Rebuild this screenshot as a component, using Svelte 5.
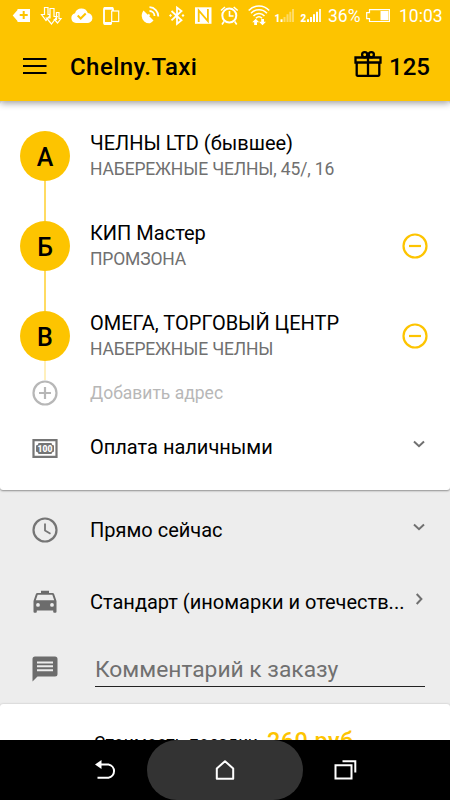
<script>
    let comment = "";

    const stops = [
        { letter: "А", title: "ЧЕЛНЫ LTD (бывшее)", address: "НАБЕРЕЖНЫЕ ЧЕЛНЫ, 45/, 16", removable: false },
        { letter: "Б", title: "КИП Мастер", address: "ПРОМЗОНА", removable: true },
        { letter: "В", title: "ОМЕГА, ТОРГОВЫЙ ЦЕНТР", address: "НАБЕРЕЖНЫЕ ЧЕЛНЫ", removable: true },
    ];
</script>

<div class="screen">
    <header class="top">
        <div class="status">
            <svg class="notifications" viewBox="0 0 124 32" fill="#fff">
                <path fill-rule="evenodd" d="M12.7 15.5 17.5 10V9H30v13H17.5v-1zM22.7 11v3h-3v2h3v3h2v-3h3v-2h-3v-3z" />
                <g fill="none" stroke="#fff" stroke-width="1.2">
                    <path d="M44.5 7.5h3.5v7h3L46 20.5l-4.500-6h3z" />
                    <path d="M50 8.500h4v8h3L51.500 24 46.500 18h3.500z" fill="#fdc400" />
                    <path d="M56.500 12.500h2.500v6h2L57.500 23l-3-3.500h2z" />
                </g>
                <path d="M76 23a5 5 0 0 1-1-9.800 6.800 6.800 0 0 1 12.800-.2A5 5 0 0 1 87 23z" />
                <path d="m77.700 15.500 3 3 5-5" fill="none" stroke="#fdc400" stroke-width="2" />
                <g fill="none" stroke="#fff">
                    <path d="M111 24h-6q-1 0-1-1V9q0-1 1-1h7q1 0 1 1v2" stroke-width="1.800" />
                    <path d="M104 8.500h9M104 23.300h8" stroke-width="2.500" />
                    <rect x="111.700" y="11" width="7" height="10.500" fill="#fdc400" stroke-width="1.200" />
                </g>
            </svg>
            <svg class="system" viewBox="140 0 182 32" fill="#fff">
                <path d="M143.500 10.500 153.500 20.500A8 8 0 0 1 150 23.200a7.500 7.500 0 0 1-8.300-7.200c0-2 .7-4 1.800-5.500z" />
                <path d="M149.500 14.500 148 16M149.500 11a5 5 0 0 1 5 5M149.500 7.200a9 9 0 0 1 8.800 9.300" fill="none" stroke="#fff" stroke-width="1.800" />
                <g fill="none" stroke="#fff" stroke-width="1.800">
                    <path d="m171.500 11 10 9.300-4.500 3.500V7.500l4.500 3.500-10 9.300" />
                </g>
                <path d="m170.500 14 1.500 1.500-1.500 1.500-1.500-1.500zM183 14l1.500 1.500L183 17l-1.500-1.500z" />
                <path d="M195 7.300h16.500v16.500H195z" />
                <path d="M198.700 22V10.500l9.200 10.500V9" fill="none" stroke="#fdc400" stroke-width="1.800" />
                <g fill="none" stroke="#fff" stroke-width="2">
                    <circle cx="229.300" cy="15.600" r="7" />
                    <path d="M229.500 11v5h4M221 10.500 225 7M237.700 10.500 233.700 7M224 21.500l-2 3M234.700 21.500l2 3" stroke-width="1.600" />
                </g>
                <g fill="none" stroke="#fff" stroke-width="1.500">
                    <path d="M248.700 10.500c5.500-6 15-6 20.500 0M251 13.300c4.300-4.800 11.700-4.800 16 0M253.500 16c3-3.500 8-3.500 11 0M256 18.300c1.700-2 4.300-2 6 0" />
                </g>
                <path d="m255.700 18.700 3.500 3.500h-2.200v2.800h-2.800v-2.800h-2zM262.500 25.200l-3.500-3.500h2.200V19h2.800v2.700h2z" />
                <text x="274.500" y="22">1</text>
                <path d="M280.500 19.300h2V22h-2z" />
                <path d="M283.500 17h2v5h-2zM286.500 14.300h2V22h-2zM289.300 11.700h2V22h-2zM292 9h2v13h-2z" opacity=".4" />
                <text x="300.500" y="22">2</text>
                <path d="M307 19.300h2V22h-2zM310 17h2v5h-2zM313 14.300h2V22h-2zM316 11.700h2V22h-2z" />
                <path d="M319 9h2v13h-2z" opacity=".85" />
            </svg>
            <span class="percent">36%</span>
            <svg class="battery" viewBox="366 0 24 32">
                <path d="M369.500 9.700h20v11.800h-20v-2.800h-2.800v-6h2.800z" fill="none" stroke="#fff" stroke-width="1.200" />
                <path d="M380.500 11h8v9.200h-8z" fill="#fff" />
            </svg>
            <span class="time">10:03</span>
        </div>
        <div class="toolbar">
            <button class="menu" aria-label="Меню">
                <svg viewBox="0 0 24 18" fill="#000">
                    <path d="M0 0h23.500v2H0zM0 7h23.500v2H0zM0 14h23.500v2H0z" />
                </svg>
            </button>
            <h1>Chelny.Taxi</h1>
            <svg class="gift" viewBox="0 0 28 26" fill="none" stroke="#000" stroke-width="2.300">
                <path d="M1.500 6.500h25v5h-25zM2.700 11.500h22.600v12.300q0 1-1 1H3.700q-1 0-1-1zM14 6.500v18" />
                <circle cx="10.700" cy="3.800" r="2.600" />
                <circle cx="17.300" cy="3.800" r="2.600" />
            </svg>
            <span class="bonus">125</span>
        </div>
    </header>

    <main>
        <section class="card route">
            {#each stops as stop, i}
                <div class="stop">
                    <div class="track">
                        <span class="letter">{stop.letter}</span>
                        <span class="line" class:faint={i === stops.length - 1}></span>
                    </div>
                    <div class="place">
                        <div class="title">{stop.title}</div>
                        <div class="address">{stop.address}</div>
                    </div>
                    {#if stop.removable}
                        <button class="remove" aria-label="Удалить">
                            <svg viewBox="0 0 26 26" fill="none" stroke="#fdc400" stroke-width="2.200">
                                <circle cx="13" cy="13" r="11.500" />
                                <path d="M7 13h12" />
                            </svg>
                        </button>
                    {/if}
                </div>
            {/each}
            <div class="row add">
                <svg class="icon" viewBox="0 0 26 26" fill="none" stroke="#b7b7b7" stroke-width="2.200">
                    <circle cx="13" cy="13" r="11.500" />
                    <path d="M7 13h12M13 7v12" />
                </svg>
                <span class="label">Добавить адрес</span>
            </div>
            <div class="row payment">
                <svg class="icon" viewBox="0 0 26 26">
                    <path d="M1.500 5.200h23v16.600h-23z" fill="none" stroke="#757575" stroke-width="2.200" />
                    <path d="M6.500 8h13q0 2 2.500 2.500v6q-2.500.5-2.500 2.500h-13q0-2-2.500-2.500v-6q2.500-.5 2.500-2.500z" fill="#757575" />
                    <text x="13" y="16.700" text-anchor="middle">100</text>
                </svg>
                <span class="label">Оплата наличными</span>
                <svg class="arrow" viewBox="0 0 12 12"><path d="m1 3.500 5 4.700 5-4.700" /></svg>
            </div>
        </section>

        <section class="options">
            <div class="row when">
                <svg class="icon" viewBox="0 0 26 26" fill="none" stroke="#757575">
                    <circle cx="13" cy="13" r="11.500" stroke-width="2.200" />
                    <path d="M13 6.500v7l5.500 3.200" stroke-width="1.800" />
                </svg>
                <span class="label">Прямо сейчас</span>
                <svg class="arrow" viewBox="0 0 12 12"><path d="m1 3.500 5 4.700 5-4.700" /></svg>
            </div>
            <div class="row tariff">
                <svg class="icon" viewBox="0 0 26 26" fill="#6c6c6c">
                    <path fill-rule="evenodd" d="M22.200 5.200Q21.800 4 20.500 4H17V1.700H9V4H5.500Q4.200 4 3.800 5.200L1.500 12v10.700q0 1 1 1h1.300q1 0 1-1v-1.300h16.400v1.300q0 1 1 1h1.300q1 0 1-1V12zM6 17.800a1.900 1.900 0 1 1 0-3.800 1.900 1.900 0 0 1 0 3.800zm14 0a1.900 1.900 0 1 1 0-3.800 1.900 1.900 0 0 1 0 3.800zM3.800 11.300l1.900-5.600h14.600l1.900 5.600z" />
                </svg>
                <span class="label">Стандарт (иномарки и отечеств...</span>
                <svg class="arrow" viewBox="0 0 12 12"><path d="m3.700 1 4.700 5-4.700 5" /></svg>
            </div>
            <div class="row comment">
                <svg class="icon" viewBox="0 0 26 26" fill="#6c6c6c">
                    <path fill-rule="evenodd" d="M3 .500h20q2.500 0 2.500 2.500v15q0 2.500-2.500 2.500H5.500L.500 25.500V3Q.500.500 3 .500zM5 5.500v2h16v-2zM5 9.300v2h16v-2zM5 13.200v2h16v-2z" />
                </svg>
                <input type="text" placeholder="Комментарий к заказу" bind:value={comment} />
            </div>
        </section>

        <section class="card cost">
            <span>Стоимость поездки</span>
            <b>260 руб</b>
        </section>
    </main>

    <nav>
        <button aria-label="Назад">
            <svg viewBox="0 0 24 24" fill="none" stroke="#fff" stroke-width="2">
                <path d="M4 6.500h11.500a6.700 6.700 0 0 1 0 13.200H4.500" />
                <path d="M2 6.500 8.500 2v9z" fill="#fff" stroke="none" />
            </svg>
        </button>
        <button class="home" aria-label="Домой">
            <svg viewBox="0 0 24 24" fill="none" stroke="#fff" stroke-width="2">
                <path d="M3.800 20.700V10.500L12 3.200l8.200 7.300v10.200z" stroke-linejoin="round" />
            </svg>
        </button>
        <button aria-label="Недавние">
            <svg viewBox="0 0 24 24" fill="none" stroke="#fff" stroke-width="2">
                <path d="M2.500 7.200h16v13.200h-16zM9.500 3.200h12.800v11.300" />
            </svg>
        </button>
    </nav>
</div>

<style>
    :global(body) {
        margin: 0;
        background: #ededed;
    }

    .screen {
        display: flex;
        flex-direction: column;
        width: 450px;
        height: 800px;
        overflow: hidden;
        background: #ededed;
        color: #000;
        font-family: Roboto, "Liberation Sans", sans-serif;
        font-size: 20px;
    }

    button {
        padding: 0;
        border: 0;
        background: none;
    }

    svg {
        display: block;
        flex: none;
    }

    .top {
        flex: none;
        height: 101px;
        background: #fdc400;
        box-shadow: 0 2px 7px rgba(0, 0, 0, 0.4);
        z-index: 1;
    }

    .status {
        display: flex;
        align-items: center;
        height: 32px;
        color: #fff;
        font-size: 17.5px;
    }

    .status text {
        font-size: 10px;
        font-weight: 900;
    }

    .notifications {
        width: 124px;
        height: 32px;
    }

    .system {
        width: 182px;
        height: 32px;
        margin-left: 16px;
    }

    .percent {
        width: 38px;
        padding-left: 6px;
        white-space: nowrap;
    }

    .battery {
        width: 24px;
        height: 32px;
    }

    .time {
        margin-left: 9px;
    }

    .toolbar {
        display: flex;
        align-items: center;
        height: 69px;
        padding: 0 20px 0 23px;
    }

    .menu svg {
        width: 24px;
        height: 18px;
    }

    h1 {
        flex: 1;
        margin: 1px 0 0 23px;
        font-size: 24px;
        font-weight: 500;
        letter-spacing: 0.45px;
    }

    .gift {
        width: 28px;
        height: 26px;
        margin: -5px 7px 0 0;
    }

    .bonus {
        font-size: 24px;
        font-weight: 500;
    }

    main {
        flex: 1;
        min-height: 0;
        overflow: hidden;
    }

    .card {
        background: #fff;
        border-radius: 3px;
        box-shadow: 0 1px 2px rgba(0, 0, 0, 0.4);
    }

    .route {
        height: 359px;
        padding-top: 30px;
    }

    .stop {
        display: flex;
        height: 90px;
        padding: 0 22px 0 20px;
    }

    .stop:nth-child(3) {
        height: 69px;
    }

    .track {
        display: flex;
        flex-direction: column;
        align-items: center;
        width: 70px;
        padding-right: 20px;
        box-sizing: border-box;
    }

    .letter {
        flex: none;
        width: 50px;
        height: 50px;
        border-radius: 50%;
        background: #fdc400;
        font-size: 25px;
        font-weight: 500;
        line-height: 53px;
        text-align: center;
    }

    .line {
        flex: 1;
        width: 2px;
        background: #ffdb62;
    }

    .faint {
        background: #fff0bd;
    }

    .place {
        flex: 1;
        white-space: nowrap;
    }

    .title {
        line-height: 25px;
    }

    .address {
        color: #707070;
        font-size: 17.5px;
        line-height: 27px;
        letter-spacing: -0.15px;
    }

    .remove {
        width: 26px;
        height: 50px;
    }

    .remove svg {
        width: 26px;
        height: 26px;
    }

    .row {
        display: flex;
        align-items: center;
        padding: 0 25px 0 32px;
    }

    .icon {
        width: 26px;
        height: 26px;
        margin-right: 32px;
    }

    .label {
        flex: 1;
        white-space: nowrap;
    }

    .arrow {
        width: 12px;
        height: 12px;
        margin-top: -7px;
        fill: none;
        stroke: #707070;
        stroke-width: 2;
    }

    .add {
        height: 26px;
        color: #b7b7b7;
        font-size: 17.5px;
    }

    .payment {
        height: 83px;
    }

    .payment .label {
        margin-bottom: 2px;
    }

    .payment text {
        fill: #fff;
        font-size: 8.5px;
        font-weight: 900;
    }

    .when {
        height: 80px;
    }

    .when .label,
    .tariff .label {
        margin-bottom: 1px;
    }

    .tariff {
        height: 64px;
    }

    .comment {
        align-items: flex-start;
        height: 48px;
        padding-top: 22px;
    }

    input {
        width: 330px;
        height: 34px;
        margin: -3px 0 0 5px;
        padding: 0 0 1px;
        border: 0;
        border-bottom: 1px solid #222;
        border-radius: 0;
        box-sizing: border-box;
        background: none;
        font: inherit;
        font-size: 22.8px;
        outline: none;
    }

    input::placeholder {
        color: #707070;
        opacity: 1;
    }

    .cost {
        display: flex;
        align-items: baseline;
        gap: 9px;
        height: 80px;
        padding: 23px 0 0 94px;
        box-shadow: 0 0 2px rgba(0, 0, 0, 0.25);
        font-size: 17.5px;
        letter-spacing: 0.1px;
        white-space: nowrap;
    }

    .cost b {
        color: #fdc400;
        font-size: 23.5px;
        font-weight: 500;
        letter-spacing: 0.4px;
    }

    nav {
        display: flex;
        align-items: center;
        justify-content: center;
        flex: none;
        height: 60px;
        background: #000;
        z-index: 1;
    }

    nav button {
        display: flex;
        align-items: center;
        justify-content: center;
        width: 84px;
        height: 60px;
    }

    nav svg {
        width: 24px;
        height: 24px;
    }

    nav .home {
        width: 156px;
        border-radius: 30px;
        background: #333;
    }
</style>
